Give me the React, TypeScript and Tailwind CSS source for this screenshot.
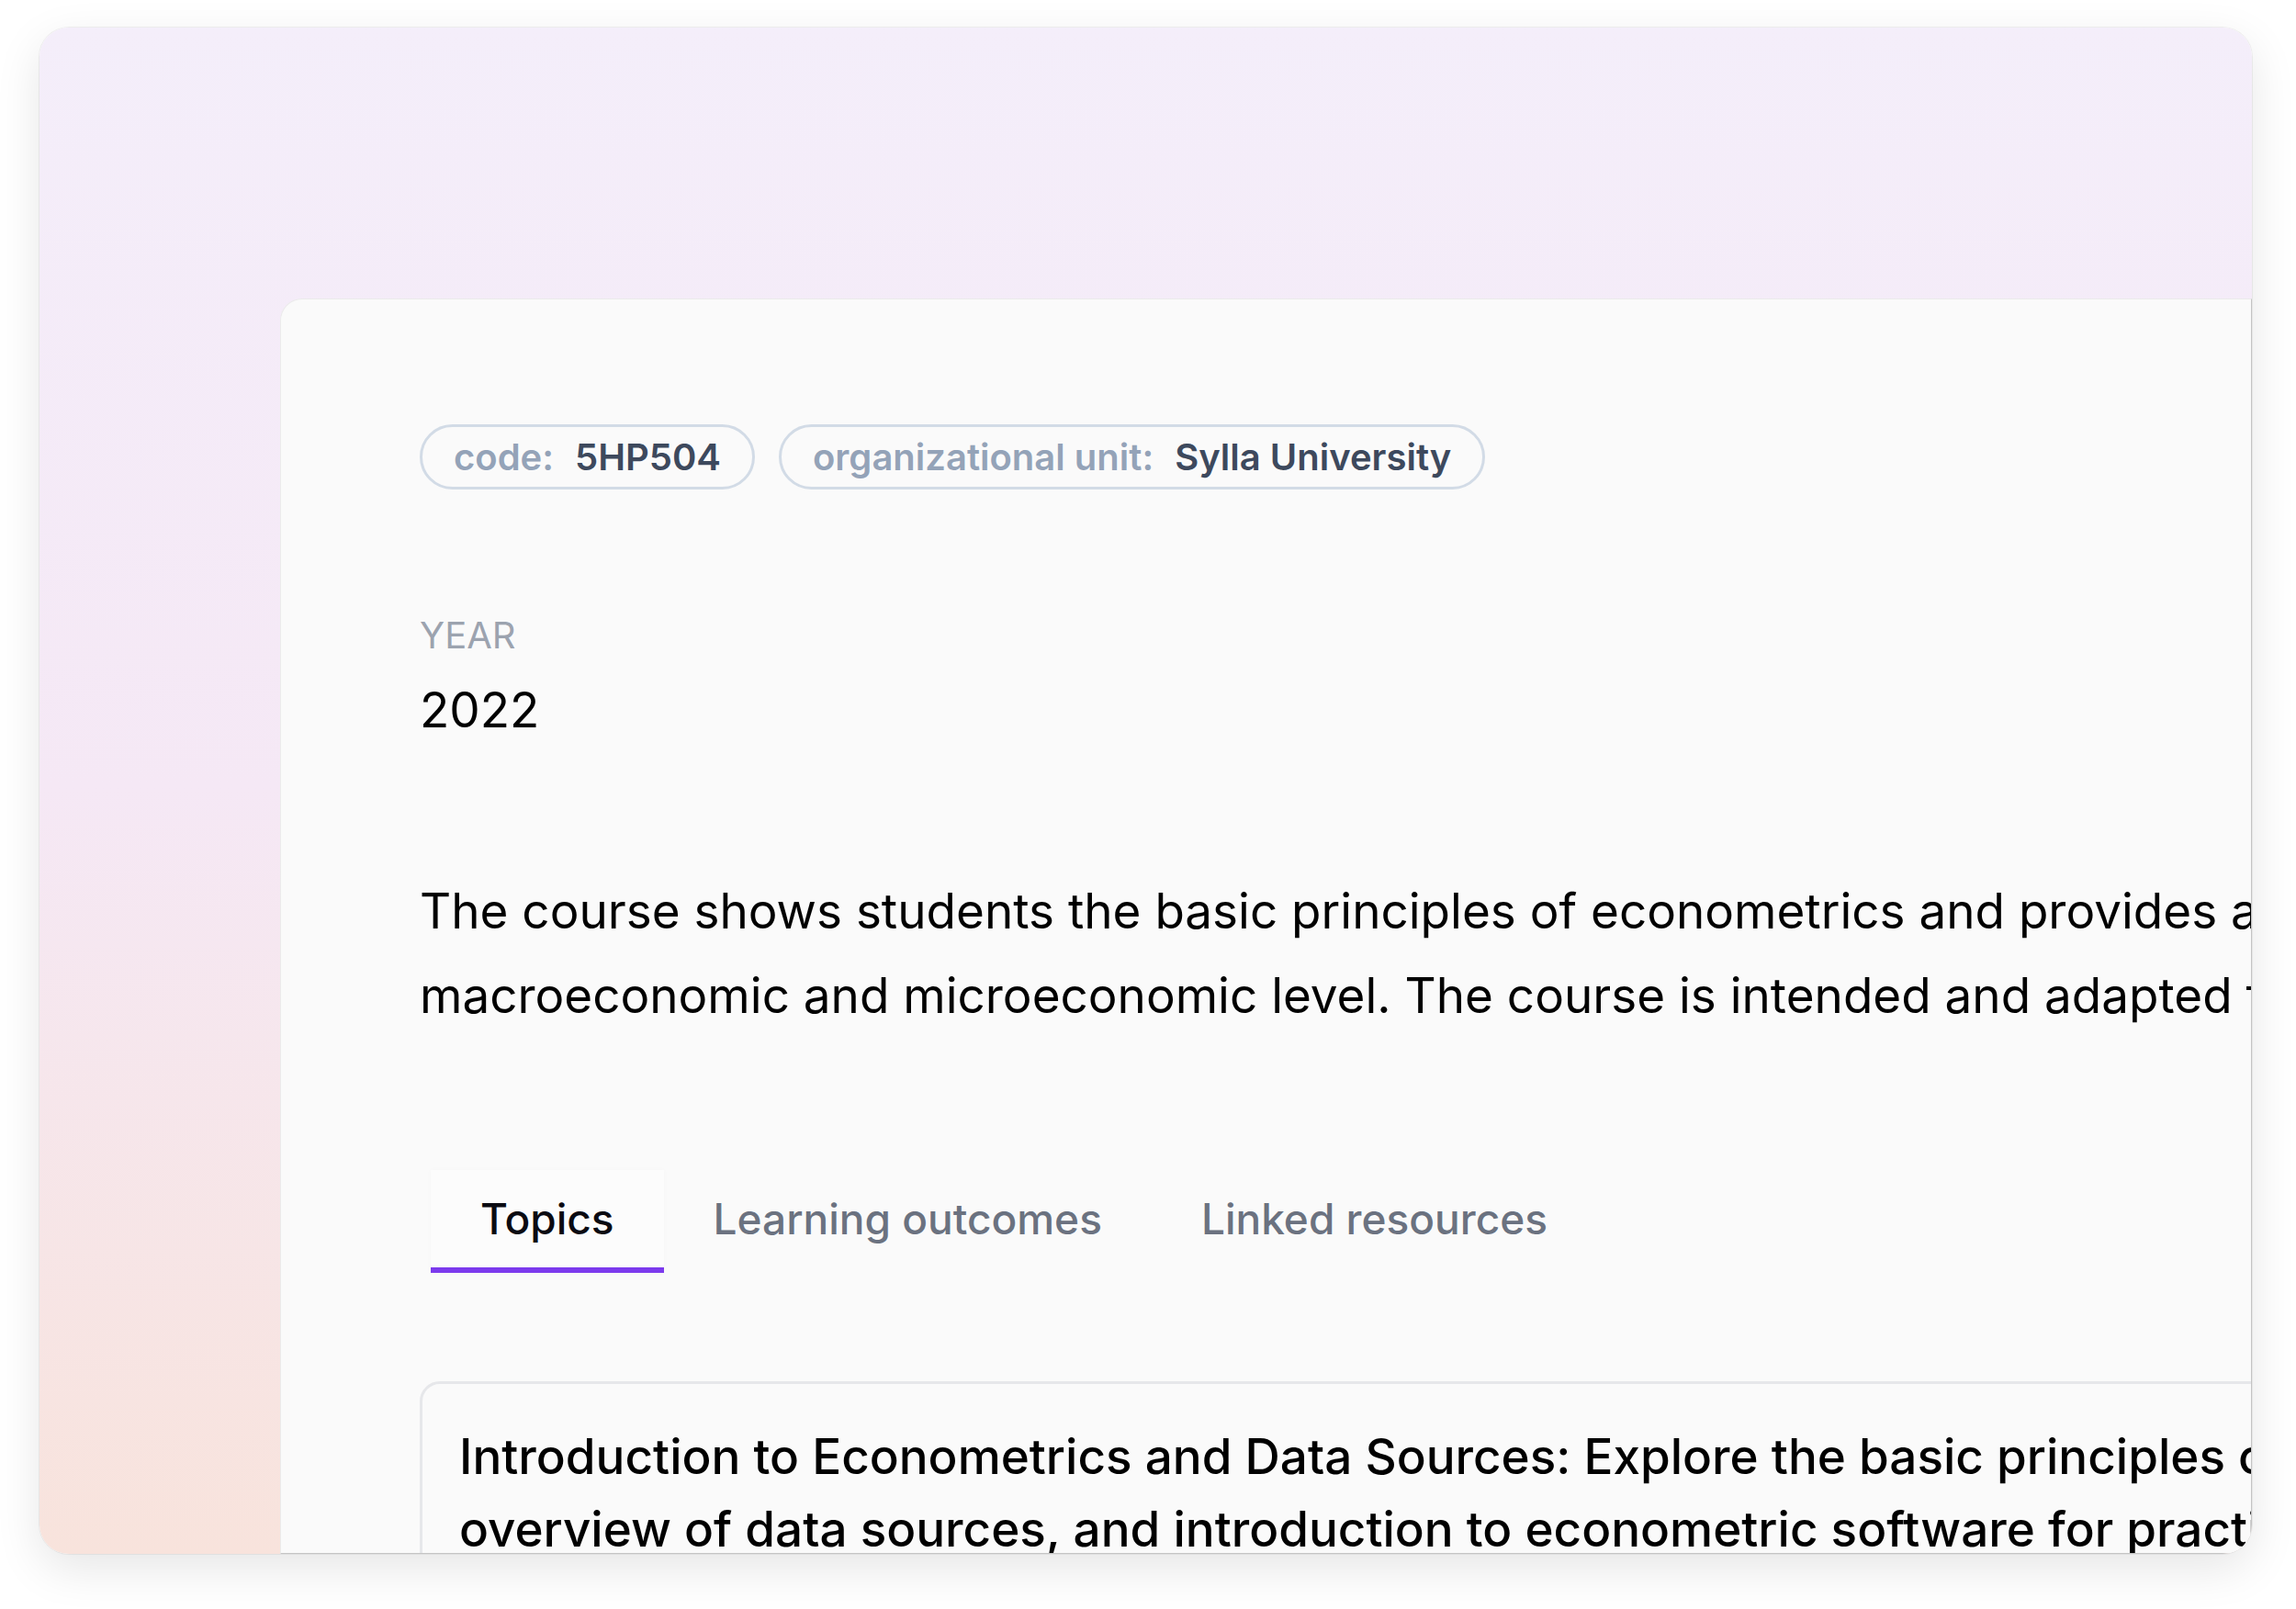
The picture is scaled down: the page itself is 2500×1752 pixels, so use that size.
const tabs = ["Topics", "Learning outcomes", "Linked resources"];

const Chip = ({ label, value }: { label: string; value: string }) => (
    <div className="flex h-[71px] items-center gap-[23px] rounded-full border-[3px] border-[#d2dbe6] px-[34px] text-[40px] font-semibold">
        <span className="text-[#94a3b8]">{label}</span>
        <span className="text-[#3d495d]">{value}</span>
    </div>
);

export default function App() {
    return (
        <div className="h-[1752px] w-[2500px] bg-white pl-[43px] pt-[30px] font-['Inter','Noto_Sans',sans-serif]">
            <div className="flex h-[1662px] w-[2409px] flex-col overflow-hidden rounded-[32px] bg-linear-to-b from-[#f4eefa] via-[#f5e8f5] to-[#f8e3dc] shadow-[0_0_0_1px_rgba(0,0,0,0.05),0_16px_50px_rgba(0,0,0,0.1)]">
                <div className="ml-[262px] mt-[295px] flex-1 overflow-hidden rounded-tl-[24px] border border-[#ebebeb] border-r-[#c4c4c4] border-b-[#c4c4c4] bg-[#fafafa]">
                    <div className="flex w-[3000px] flex-col pl-[151px] pt-[136px]">
                        <div className="flex gap-[26px]">
                            <Chip label="code:" value="5HP504" />
                            <Chip label="organizational unit:" value="Sylla University" />
                        </div>

                        <div className="mt-[135px] text-[40px] uppercase leading-[48px] text-[#9ca3af]">Year</div>
                        <div className="mt-[23px] text-[53px] leading-[68px] text-black">2022</div>

                        <p className="mt-[139px] whitespace-nowrap text-[53px] leading-[92px] text-black">
                            <span className="block">The course shows students the basic principles of econometrics and provides an insight into its application at the</span>
                            <span className="block">macroeconomic and microeconomic level. The course is intended and adapted for students of economics.</span>
                        </p>

                        <div className="ml-[12px] mt-[144px] flex">
                            {tabs.map((tab, i) => (
                                <div
                                    key={tab}
                                    className={`border-b-[6px] px-[54px] py-[24px] text-[46px] font-medium leading-[58px] ${
                                        i === 0 ? "border-[#7c3aed] bg-[#fcfcfc] text-[#0b0b12] shadow-[0_0_6px_rgba(0,0,0,0.025)]" : "border-transparent text-[#6b7280]"
                                    }`}
                                >
                                    {tab}
                                </div>
                            ))}
                        </div>

                        <div className="mt-[118px] w-[2600px] rounded-[22px] border-[3px] border-[#e6e7ea] bg-[#fafafa] px-[40px] pt-[40px] pb-[40px]">
                            <p className="whitespace-nowrap text-[53px] font-medium leading-[79px] text-black">
                                <span className="block">Introduction to Econometrics and Data Sources: Explore the basic principles of econometrics, its role in economic research, an</span>
                                <span className="block">overview of data sources, and introduction to econometric software for practical work.</span>
                            </p>
                        </div>
                    </div>
                </div>
            </div>
        </div>
    );
}
